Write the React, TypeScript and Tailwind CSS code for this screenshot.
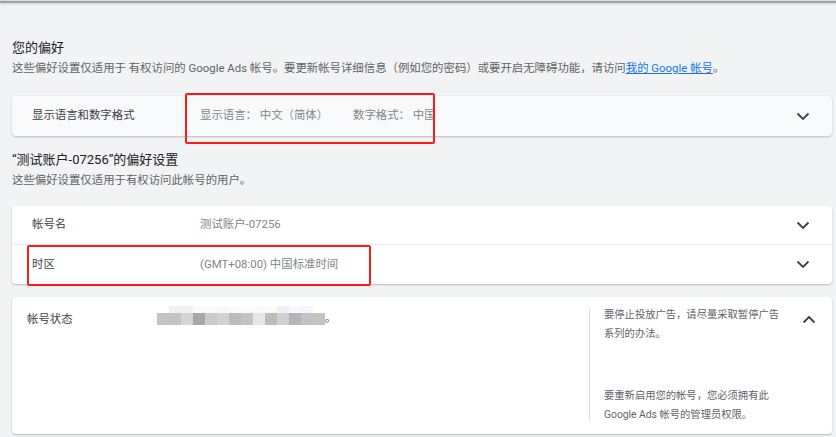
import React from 'react';

const font = { fontFamily: '"Roboto", "Noto Sans CJK SC", sans-serif' };

const Chevron: React.FC<{ up?: boolean }> = ({ up }) => (
  <svg width="14" height="9" viewBox="0 0 14 9" className={up ? 'rotate-180' : ''}>
    <path d="M1.5 1.5 L7 7 L12.5 1.5" fill="none" stroke="#3c4043" strokeWidth="1.8" />
  </svg>
);

const blurTop = ['#ffffff', '#f2f2f2', '#f2f2f2', '#fafafa', '#fafafa', '#f7f7f7', '#fafafa', '#fbfbfb', '#f9f9f9', '#fafafa', '#f0f0f0', '#f8f8f8', '#f5f5f5', '#ffffff'];
const blurBottom = ['#c3c3c3', '#c4c4c4', '#d5d5d2', '#a8a6a8', '#c9cacc', '#d4d1d0', '#bbbabd', '#c4c3bd', '#e6e7e9', '#bdbcb5', '#cfd0d2', '#b6b4b7', '#c2c1c4', '#c4c4bf'];

// mosaic that hides the account status text
const Mosaic = () => (
  <div className="flex flex-col">
    <div className="flex h-[7px]">
      {blurTop.map((c, i) => (
        <div key={i} className="w-3 h-full" style={{ background: c }} />
      ))}
    </div>
    <div className="flex h-[12px]">
      {blurBottom.map((c, i) => (
        <div key={i} className="w-3 h-full" style={{ background: c }} />
      ))}
    </div>
  </div>
);

export default function App() {
  return (
    <div className="relative w-[836px] h-[437px] overflow-hidden bg-[#f1f3f4] text-[#3c4043]" style={font}>
      <div className="h-[1px] bg-[#e0e0e0]" />
      <div className="h-[2px] bg-[#a0a3a6] shadow-[0_1px_3px_rgba(0,0,0,0.2)]" />

      <div className="pl-3 pr-1">
        <h2 className="mt-[36px] text-[13px] leading-[18px] text-[#202124]">您的偏好</h2>
        <p className="mt-[2px] text-[11.4px] leading-[18px] text-[#5f6368]">
          这些偏好设置仅适用于 有权访问的 Google Ads 帐号。要更新帐号详细信息（例如您的密码）或要开启无障碍功能，请访问
          <span className="text-[#1a73e8] underline">我的 Google 帐号</span>。
        </p>

        <div className="mt-[19px] h-[40px] rounded bg-[#f8f9fa] shadow-[0_1px_2px_rgba(60,64,67,0.3)] flex items-center text-[11.4px]">
          <div className="w-[188px] pl-5 text-[#3c4043]">显示语言和数字格式</div>
          <div className="w-[153px] text-[#80868b]">显示语言： 中文（简体）</div>
          <div className="flex-1 text-[#80868b]">数字格式： 中国</div>
          <div className="pr-[22px]"><Chevron /></div>
        </div>

        <h2 className="mt-[15px] text-[13px] leading-[18px] text-[#202124]">“测试账户-07256”的偏好设置</h2>
        <p className="mt-[2px] text-[11.4px] leading-[18px] text-[#5f6368]">这些偏好设置仅适用于有权访问此帐号的用户。</p>

        <div className="mt-[17px] rounded bg-white shadow-[0_1px_2px_rgba(60,64,67,0.3)] text-[11.4px]">
          <div className="h-[39px] flex items-center border-b border-[#e8eaed]">
            <div className="w-[188px] pl-5">帐号名</div>
            <div className="flex-1 text-[#80868b]">测试账户-07256</div>
            <div className="pr-[22px]"><Chevron /></div>
          </div>
          <div className="h-[39px] flex items-center">
            <div className="w-[188px] pl-5">时区</div>
            <div className="flex-1 text-[#80868b]">(GMT+08:00) 中国标准时间</div>
            <div className="pr-[22px]"><Chevron /></div>
          </div>
        </div>

        <div className="mt-[13px] h-[137px] rounded bg-white shadow-[0_1px_2px_rgba(60,64,67,0.3)] flex">
          <div className="w-[145px] pl-[15px] pt-[13px] text-[11.4px] leading-[18px]">帐号状态</div>
          <div className="w-[432px] pt-[9px] flex items-start">
            <Mosaic />
            <span className="text-[11px] leading-[19px] pt-[3px]">。</span>
          </div>
          <div className="my-[13px] w-px bg-[#dadce0]" />
          <div className="w-[192px] pl-[14px] pt-[8px] pb-[10px] flex flex-col justify-between text-[10.3px] leading-[19px] text-[#5f6368]">
            <p>要停止投放广告，请尽量采取暂停广告系列的办法。</p>
            <p>要重新启用您的帐号，您必须拥有此 Google Ads 帐号的管理员权限。</p>
          </div>
          <div className="pl-[20px] pt-[18px]"><Chevron up /></div>
        </div>
      </div>

      {/* red highlight boxes */}
      <div className="absolute left-[185px] top-[93px] w-[250px] h-[51px] border-2 border-[#ff1a1a] rounded-[2px]" />
      <div className="absolute left-[27px] top-[245px] w-[344px] h-[41px] border-2 border-[#ff1a1a] rounded-[2px]" />
    </div>
  );
}
